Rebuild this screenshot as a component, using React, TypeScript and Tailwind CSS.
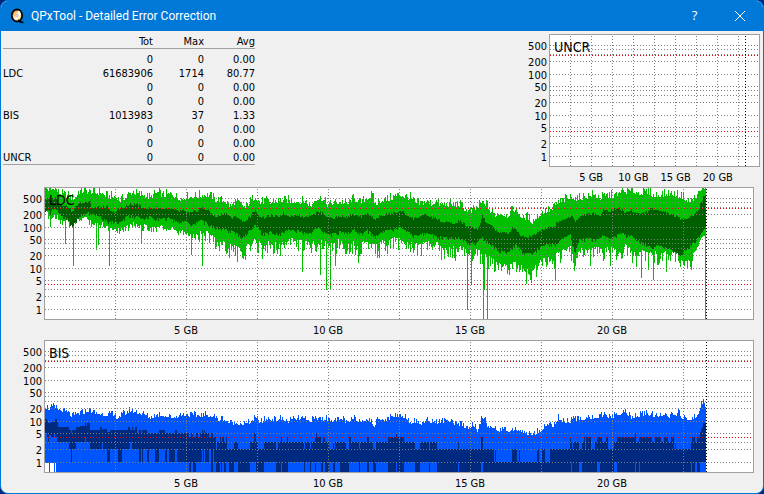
import { ReactNode } from "react";

type Points = number[][];

const PLOT_HEIGHT = 133;

// pixel row of a value on the logarithmic axis, 41px per decade
const rowOf = (value: number) => 122 - Math.ceil(41 * Math.log10(value));

const GRID_VALUES = [500, 400, 300, 200, 100, 50, 40, 30, 20, 10, 5, 3, 2, 1];
const LIMIT_ROWS = [21, 97];

const TICKS = [
  { value: 500, className: "" },
  { value: 200, className: "mt-1" },
  { value: 100, className: "mt-px" },
  { value: 50, className: "" },
  { value: 20, className: "mt-1" },
  { value: 10, className: "mt-px" },
  { value: 5, className: "" },
  { value: 2, className: "mt-1" },
  { value: 1, className: "mt-px" },
];

const ROWS = [
  { name: "", tot: "0", max: "0", avg: "0.00" },
  { name: "LDC", tot: "61683906", max: "1714", avg: "80.77" },
  { name: "", tot: "0", max: "0", avg: "0.00" },
  { name: "", tot: "0", max: "0", avg: "0.00" },
  { name: "BIS", tot: "1013983", max: "37", avg: "1.33" },
  { name: "", tot: "0", max: "0", avg: "0.00" },
  { name: "", tot: "0", max: "0", avg: "0.00" },
  { name: "UNCR", tot: "0", max: "0", avg: "0.00" },
];

// LDC envelopes, [x, y] in plot pixels
const LDC_MAX: Points = [
  [1, 1], [6, 3], [11, 1], [14, 6], [19, 8], [24, 9], [28, 12], [31, 11], [34, 5], [39, 4], [44, 5], [53, 6],
  [56, 5], [61, 9], [66, 10], [71, 10], [76, 13], [81, 11], [84, 8], [89, 5], [94, 8], [99, 8], [106, 11],
  [111, 7], [114, 6], [118, 9], [128, 7], [133, 11], [138, 12], [143, 10], [156, 9], [161, 8], [166, 9],
  [171, 13], [181, 14], [186, 20], [191, 15], [196, 17], [201, 21], [206, 14], [211, 10], [216, 16],
  [221, 14], [226, 16], [231, 14], [246, 14], [256, 15], [261, 14], [266, 20], [271, 12], [278, 12],
  [284, 19], [289, 16], [296, 15], [303, 17], [309, 12], [316, 16], [323, 11], [328, 9], [331, 18],
  [336, 14], [346, 12], [351, 9], [356, 8], [361, 10], [366, 11], [371, 16], [376, 17], [381, 15],
  [388, 17], [391, 14], [396, 18], [409, 18], [416, 18], [421, 23], [427, 25], [433, 21], [437, 16],
  [443, 18], [446, 25], [451, 28], [456, 26], [463, 29], [469, 23], [474, 25], [479, 33], [483, 30],
  [488, 35], [493, 30], [498, 26], [503, 24], [508, 23], [513, 16], [518, 14], [523, 12], [528, 10],
  [533, 13], [538, 11], [549, 8], [556, 11], [563, 9], [571, 9], [574, 9], [576, 4], [581, 5], [587, 4],
  [594, 6], [606, 6], [609, 9], [618, 8], [624, 7], [632, 8], [639, 10], [643, 15], [648, 13], [651, 11],
  [654, 8], [657, 3], [659, 1], [662, 0],
];

const LDC_AVG_TOP: Points = [
  [1, 12], [6, 13], [11, 11], [14, 16], [19, 18], [24, 20], [28, 25], [33, 17], [38, 16], [46, 13], [47, 20],
  [63, 20], [68, 26], [73, 23], [79, 20], [86, 18], [93, 17], [96, 20], [103, 21], [123, 21], [133, 24],
  [139, 24], [146, 26], [153, 24], [156, 20], [161, 22], [166, 25], [171, 30], [176, 28], [181, 26],
  [188, 31], [193, 30], [199, 35], [206, 30], [211, 22], [214, 28], [219, 31], [226, 29], [233, 30],
  [239, 27], [246, 29], [253, 28], [258, 30], [263, 29], [273, 25], [278, 26], [284, 30], [289, 31],
  [296, 29], [303, 30], [309, 28], [316, 30], [323, 27], [331, 32], [336, 29], [343, 27], [349, 26],
  [356, 24], [363, 28], [369, 32], [376, 29], [383, 28], [388, 31], [391, 30], [396, 35], [403, 35],
  [409, 37], [416, 34], [423, 40], [429, 41], [434, 42], [438, 28], [441, 36], [448, 38], [451, 43],
  [456, 46], [464, 46], [470, 40], [476, 48], [484, 50], [489, 48], [496, 43], [503, 41], [509, 40],
  [514, 35], [523, 31], [528, 28], [531, 35], [536, 29], [543, 27], [549, 27], [556, 28], [559, 22],
  [564, 24], [569, 23], [574, 20], [579, 25], [586, 24], [593, 26], [598, 26], [603, 25], [606, 22],
  [613, 23], [619, 24], [624, 26], [629, 28], [636, 32], [643, 31], [649, 28], [654, 23], [657, 16],
  [659, 11], [662, 7],
];

const LDC_AVG_BOTTOM: Points = [
  [1, 23], [6, 25], [11, 21], [16, 29], [23, 31], [28, 40], [34, 30], [44, 26], [48, 28], [56, 30], [64, 35],
  [71, 35], [76, 36], [83, 29], [89, 29], [98, 32], [106, 30], [114, 32], [123, 31], [133, 35], [139, 34],
  [148, 38], [156, 33], [163, 36], [171, 41], [176, 41], [183, 43], [189, 45], [199, 50], [206, 43],
  [211, 38], [218, 47], [226, 45], [236, 47], [243, 43], [251, 44], [256, 43], [264, 48], [273, 40],
  [279, 45], [286, 48], [296, 45], [304, 46], [309, 43], [318, 47], [323, 43], [331, 50], [338, 45],
  [346, 43], [356, 41], [363, 45], [371, 49], [379, 46], [388, 48], [394, 50], [404, 51], [414, 50],
  [423, 56], [431, 56], [438, 51], [444, 56], [451, 61], [459, 65], [464, 66], [471, 58], [481, 67],
  [489, 66], [496, 61], [503, 58], [511, 58], [519, 51], [526, 48], [529, 60], [531, 66], [534, 54],
  [543, 51], [549, 53], [559, 48], [566, 53], [572, 48], [576, 47], [585, 48], [591, 52], [597, 55],
  [606, 61], [614, 58], [622, 61], [629, 65], [635, 68], [643, 61], [649, 56], [654, 51], [658, 45],
  [662, 38],
];

const LDC_MIN: Points = [
  [1, 24], [7, 32], [11, 28], [16, 33], [23, 35], [28, 40], [34, 32], [41, 31], [46, 35], [53, 38], [59, 36],
  [64, 41], [71, 41], [76, 43], [83, 40], [88, 36], [94, 40], [103, 39], [111, 42], [118, 40], [123, 43],
  [128, 42], [133, 47], [138, 45], [143, 48], [148, 49], [153, 48], [156, 43], [163, 45], [169, 50],
  [174, 56], [181, 55], [189, 60], [199, 64], [206, 56], [213, 53], [218, 60], [226, 55], [234, 57],
  [243, 53], [251, 53], [259, 55], [266, 58], [271, 53], [279, 54], [286, 57], [296, 53], [303, 57],
  [309, 56], [314, 62], [319, 54], [326, 57], [331, 60], [338, 55], [344, 56], [351, 51], [356, 53],
  [366, 54], [373, 59], [383, 56], [393, 57], [399, 63], [409, 61], [418, 61], [423, 65], [433, 64],
  [439, 67], [446, 72], [453, 77], [463, 80], [471, 76], [481, 82], [488, 83], [494, 77], [503, 69],
  [508, 73], [513, 67], [519, 64], [526, 61], [530, 76], [536, 63], [543, 61], [559, 63], [566, 61],
  [574, 64], [578, 68], [582, 56], [589, 66], [596, 63], [604, 67], [611, 65], [618, 68], [625, 63],
  [632, 66], [639, 72], [645, 76], [649, 68], [653, 60], [657, 53], [660, 48], [662, 44],
];

const LDC_DROPS: Points = [
  [6, 40], [21, 57], [29, 79], [52, 63], [54, 58], [65, 79], [97, 56], [147, 68], [158, 79], [185, 71],
  [193, 75], [236, 69], [258, 85], [276, 88], [282, 103], [286, 103], [291, 79], [314, 76], [335, 71],
  [397, 73], [411, 74], [423, 123], [427, 98], [439, 132], [440, 103], [443, 132], [482, 97], [487, 96],
  [511, 93], [531, 79], [546, 79], [566, 79], [592, 80], [597, 91], [604, 83], [609, 93], [622, 85],
  [647, 83], [661, 132],
];

const BIS_MAX: Points = [
  [1, 67], [4, 69], [9, 68], [14, 70], [23, 73], [28, 77], [33, 75], [39, 73], [44, 71], [49, 73], [56, 75],
  [66, 75], [73, 78], [79, 75], [86, 71], [93, 73], [99, 75], [106, 78], [116, 75], [123, 77], [129, 78],
  [139, 75], [146, 76], [156, 76], [163, 76], [170, 77], [174, 81], [178, 79], [183, 82], [189, 84],
  [204, 84], [211, 79], [216, 83], [223, 79], [231, 81], [236, 79], [243, 82], [249, 80], [258, 79],
  [264, 82], [271, 79], [286, 80], [293, 82], [299, 79], [303, 86], [308, 79], [316, 82], [323, 79],
  [330, 86], [334, 79], [343, 80], [351, 76], [361, 77], [366, 83], [371, 82], [376, 84], [383, 82],
  [396, 83], [403, 80], [409, 85], [416, 85], [423, 88], [429, 86], [434, 92], [437, 79], [441, 79],
  [443, 87], [451, 88], [456, 92], [463, 92], [469, 90], [476, 91], [482, 94], [489, 95], [496, 91],
  [503, 85], [509, 86], [514, 79], [519, 82], [526, 82], [529, 80], [538, 80], [544, 77], [549, 79],
  [556, 77], [572, 77], [577, 73], [582, 73], [587, 78], [592, 77], [599, 75], [606, 75], [612, 78],
  [619, 74], [625, 77], [634, 74], [639, 79], [645, 80], [650, 78], [654, 74], [656, 68], [657, 61],
  [658, 64], [659, 59], [660, 63], [661, 67], [662, 73],
];

// BIS average band as blocks, [x, width, top, bottom]
const BIS_BLOCKS: Points = [
  [1, 2, 79, 93], [3, 1, 81, 97], [4, 1, 83, 102], [5, 2, 83, 95], [7, 3, 82, 97], [10, 1, 81, 93],
  [11, 2, 79, 97], [13, 1, 82, 102], [14, 11, 87, 102], [25, 2, 90, 109], [27, 1, 93, 122], [28, 4, 90, 109],
  [32, 4, 87, 102], [36, 5, 86, 102], [41, 1, 83, 97], [42, 1, 86, 102], [43, 3, 83, 102], [46, 10, 90, 109],
  [56, 2, 87, 109], [58, 1, 90, 102], [59, 4, 89, 109], [63, 3, 92, 122], [66, 8, 90, 109], [74, 4, 90, 122],
  [78, 6, 90, 109], [84, 2, 87, 109], [86, 2, 90, 102], [88, 1, 87, 109], [89, 2, 90, 109], [91, 2, 87, 109],
  [93, 2, 93, 109], [95, 2, 90, 122], [97, 1, 93, 109], [98, 1, 90, 122], [99, 4, 90, 109], [103, 2, 93, 122],
  [105, 6, 93, 109], [111, 4, 93, 122], [115, 6, 90, 109], [121, 2, 93, 122], [123, 2, 93, 109],
  [125, 6, 93, 122], [131, 2, 90, 109], [133, 12, 93, 122], [145, 2, 97, 132], [147, 2, 93, 122],
  [149, 3, 97, 132], [152, 2, 93, 122], [154, 2, 97, 122], [156, 2, 93, 122], [158, 1, 90, 109],
  [159, 1, 93, 122], [160, 1, 90, 109], [161, 4, 93, 122], [165, 2, 97, 109], [167, 2, 93, 132],
  [169, 1, 97, 109], [170, 2, 97, 122], [172, 1, 109, 132], [173, 3, 102, 132], [176, 1, 97, 122],
  [177, 1, 102, 132], [178, 2, 97, 122], [180, 2, 102, 132], [182, 1, 97, 122], [183, 2, 109, 122],
  [185, 5, 109, 132], [190, 4, 102, 122], [194, 2, 109, 132], [196, 10, 109, 132], [206, 4, 102, 122],
  [210, 2, 93, 122], [212, 2, 102, 132], [214, 2, 109, 132], [216, 4, 109, 132], [220, 12, 102, 122],
  [232, 2, 109, 132], [234, 3, 102, 132], [237, 1, 97, 122], [238, 5, 102, 132], [243, 1, 97, 132],
  [244, 16, 102, 122], [260, 1, 109, 132], [261, 5, 102, 122], [266, 1, 109, 132], [267, 4, 102, 122],
  [271, 1, 97, 132], [272, 1, 93, 122], [273, 4, 97, 122], [277, 2, 102, 132], [279, 2, 97, 122],
  [281, 2, 102, 132], [283, 2, 102, 132], [285, 4, 109, 122], [289, 1, 102, 132], [290, 1, 109, 132],
  [291, 5, 102, 122], [296, 6, 102, 132], [302, 3, 109, 132], [305, 2, 97, 122], [307, 8, 102, 122],
  [315, 1, 109, 132], [316, 7, 102, 122], [323, 2, 97, 132], [325, 4, 102, 122], [329, 3, 109, 132],
  [332, 12, 102, 122], [344, 8, 97, 132], [352, 1, 93, 122], [353, 7, 97, 132], [360, 11, 102, 122],
  [371, 5, 109, 132], [376, 9, 102, 122], [385, 1, 109, 132], [386, 7, 102, 122], [393, 21, 109, 132],
  [414, 1, 102, 122], [415, 22, 109, 132], [437, 2, 97, 122], [439, 11, 109, 132], [450, 1, 122, 132],
  [451, 1, 109, 132], [452, 16, 122, 132], [468, 5, 109, 132], [473, 2, 122, 132], [475, 1, 109, 132],
  [476, 17, 122, 132], [493, 2, 109, 132], [495, 3, 122, 132], [498, 3, 109, 132], [501, 5, 122, 132],
  [506, 20, 109, 132], [526, 1, 97, 132], [527, 1, 102, 122], [528, 1, 109, 132], [529, 6, 102, 132],
  [535, 3, 109, 122], [538, 2, 102, 132], [540, 1, 97, 132], [541, 1, 109, 132], [542, 5, 97, 132],
  [547, 4, 109, 132], [551, 2, 102, 132], [553, 3, 97, 122], [556, 2, 97, 132], [558, 4, 102, 132],
  [562, 2, 97, 132], [564, 6, 109, 132], [570, 3, 102, 122], [573, 18, 97, 132], [591, 1, 93, 122],
  [592, 3, 102, 132], [595, 1, 97, 122], [596, 12, 97, 132], [608, 3, 102, 132], [611, 6, 97, 132],
  [617, 3, 102, 132], [620, 4, 97, 132], [624, 3, 102, 132], [627, 3, 97, 132], [630, 1, 109, 132],
  [631, 1, 102, 132], [632, 15, 109, 132], [647, 1, 102, 122], [648, 3, 97, 132], [651, 2, 102, 122],
  [653, 3, 97, 132], [656, 1, 92, 122], [657, 1, 89, 122], [658, 1, 87, 122], [659, 3, 83, 122],
];

// stable jitter between 0 and 1, skewed to small values
const jitter = (x: number, seed: number) => {
  const s = Math.sin(x * 12.9898 + seed * 78.233) * 43758.5453;
  const f = s - Math.floor(s);
  return f * f;
};

const valueAt = (points: Points, x: number) => {
  for (let i = 1; i < points.length; i++) {
    const [x0, y0] = points[i - 1];
    const [x1, y1] = points[i];
    if (x >= x0 && x <= x1) {
      return y0 + ((y1 - y0) * (x - x0)) / (x1 - x0);
    }
  }
  return points[points.length - 1][1];
};

const columns = Array.from({ length: 661 }, (_, i) => i + 1);

const bar = (x: number, top: number, bottom: number) =>
  `M${x} ${Math.max(1, Math.round(top))}h1V${Math.round(bottom)}h-1z`;

const dropAt = (x: number) => LDC_DROPS.find((drop) => drop[0] === x)?.[1] ?? 0;

const ldcRange = columns
  .map((x) =>
    bar(
      x,
      valueAt(LDC_MAX, x) + 2 - jitter(x, 1) * 8,
      Math.max(
        valueAt(LDC_MIN, x) - 2 + jitter(x, 2) * (x < 150 ? 7 : x > 648 ? 3 : 14),
        dropAt(x)
      )
    )
  )
  .join("");

const ldcAverage = columns
  .map((x) =>
    bar(
      x,
      valueAt(LDC_AVG_TOP, x) + 1 - jitter(x, 3) * 3,
      valueAt(LDC_AVG_BOTTOM, x) - 1 + jitter(x, 4) * 4
    )
  )
  .join("");

const bisRange = columns
  .map((x) => {
    const isGap = (x >= 1 && x <= 4) || (x >= 6 && x <= 9) || x === 11;
    const noise = x > 653 ? 0 : 1 - jitter(x, 5) * 6;
    return bar(x, valueAt(BIS_MAX, x) + noise, isGap ? 123 : 132);
  })
  .join("");

const bisAverage = BIS_BLOCKS.map(
  ([x, width, top, bottom]) => `M${x} ${top}h${width}V${bottom}h-${width}z`
).join("");

interface IChart {
  name: string;
  width: number;
  step: number;
  end: number;
  className: string;
  axisClassName: string;
  children?: ReactNode;
}

const Chart = ({
  name,
  width,
  step,
  end,
  className,
  axisClassName,
  children,
}: IChart) => {
  return (
    <section className={`flex ${className}`} aria-label={name}>
      <ol
        className={`shrink-0 pt-[7px] pr-0.5 text-right leading-[12px] ${axisClassName}`}
      >
        {TICKS.map((tick) => (
          <li key={tick.value} className={tick.className}>
            {tick.value}
          </li>
        ))}
      </ol>
      <div className="relative min-w-0 flex-1">
        <svg
          viewBox={`0 0 ${width} ${PLOT_HEIGHT}`}
          preserveAspectRatio="none"
          shapeRendering="crispEdges"
          className="block h-[133px] w-full bg-white"
          aria-hidden="true"
        >
          {children}
          <g stroke="#808080" strokeDasharray="1 2">
            {GRID_VALUES.map((value) => (
              <line
                key={value}
                x1="1"
                x2={width - 1}
                y1={rowOf(value) + 0.5}
                y2={rowOf(value) + 0.5}
              />
            ))}
            {Array.from({ length: 9 }, (_, i) => (i + 1) * step).map((x) => (
              <line key={x} x1={x + 0.5} x2={x + 0.5} y1="2" y2="132" />
            ))}
          </g>
          <g stroke="#ff0000" strokeDasharray="1 2">
            {LIMIT_ROWS.map((y) => (
              <line key={y} x1="1" x2={width - 1} y1={y + 0.5} y2={y + 0.5} />
            ))}
          </g>
          <line
            x1={end + 0.5}
            x2={end + 0.5}
            y1="2"
            y2="132"
            stroke="#000"
            strokeDasharray="1 2"
          />
          <rect
            x="0.5"
            y="0.5"
            width={width - 1}
            height={PLOT_HEIGHT - 1}
            fill="none"
            stroke="#a0a0a0"
          />
        </svg>
        <h2 className="absolute top-[5px] left-[5px] text-[14px] leading-4">
          {name}
        </h2>
        <ol className="mt-[5px] grid grid-cols-10 text-center leading-[12px] whitespace-nowrap">
          <li className="col-span-2 col-start-2">5 GB</li>
          <li className="col-span-2">10 GB</li>
          <li className="col-span-2">15 GB</li>
          <li className="col-span-2">20 GB</li>
        </ol>
      </div>
    </section>
  );
};

const TitleBar = () => {
  return (
    <header className="flex h-[30px] items-center bg-[#0078d7] pl-[9px] text-white">
      <svg width="15" height="16" viewBox="0 0 15 16" aria-hidden="true">
        <defs>
          <linearGradient id="disc" x1="0" y1="0" x2="1" y2="1">
            <stop offset="0" stopColor="#e88a20" />
            <stop offset="0.4" stopColor="#ffcf80" />
            <stop offset="0.55" stopColor="#ffffff" />
            <stop offset="0.7" stopColor="#ffe9a0" />
            <stop offset="1" stopColor="#f0a830" />
          </linearGradient>
        </defs>
        <ellipse cx="7" cy="7.5" rx="5.2" ry="6" fill="url(#disc)" stroke="#000" strokeWidth="1.8" />
        <path d="M7 7.5L8.5 2.5L10.5 4z" fill="#fff" />
        <circle cx="7" cy="7.5" r="1.2" fill="#dcdce8" stroke="#b0a8a0" strokeWidth="0.5" />
        <path d="M8 12.5c1.5 0 2 2.3 5.5 1.8" fill="none" stroke="#000" strokeWidth="1.8" />
      </svg>
      <h1 className="ml-1.5 flex-1 font-['Roboto','Noto_Sans',sans-serif] text-[12px] leading-4">
        QPxTool - Detailed Error Correction
      </h1>
      <button
        type="button"
        aria-label="Help"
        className="flex h-full w-[45px] items-center justify-center font-['Open_Sans','Noto_Sans',sans-serif] text-[13px]"
      >
        ?
      </button>
      <button
        type="button"
        aria-label="Close"
        className="flex h-full w-[46px] items-center justify-center"
      >
        <svg width="10" height="10" viewBox="0 0 10 10" aria-hidden="true">
          <path d="M0 0l10 10M10 0l-10 10" stroke="#fff" fill="none" />
        </svg>
      </button>
    </header>
  );
};

const Summary = () => {
  return (
    <table className="w-[252px] table-fixed border-separate border-spacing-0 self-start text-right leading-[12px]">
      <thead>
        <tr>
          <th className="w-[90px] border-b border-[#a0a0a0]" />
          <th className="w-[60px] border-b border-[#a0a0a0] pt-0.5 font-normal">Tot</th>
          <th className="border-b border-[#a0a0a0] pt-0.5 font-normal">Max</th>
          <th className="border-b border-[#a0a0a0] pt-0.5 font-normal">Avg</th>
        </tr>
        <tr aria-hidden="true">
          <td className="h-[3px]" colSpan={4} />
        </tr>
      </thead>
      <tbody>
        {ROWS.map((row, index) => (
          <tr key={index} className="h-[14px]">
            <th className="pt-0.5 text-left font-normal">{row.name}</th>
            <td className="pt-0.5">{row.tot}</td>
            <td className="pt-0.5">{row.max}</td>
            <td className="pt-0.5">{row.avg}</td>
          </tr>
        ))}
      </tbody>
      <tfoot>
        <tr aria-hidden="true">
          <td className="h-px bg-[#a0a0a0]" colSpan={4} />
        </tr>
      </tfoot>
    </table>
  );
};

const App = () => {
  return (
    <div className="min-h-screen bg-[#00287a]">
      <div className="overflow-hidden rounded-lg border border-[#0078d7] bg-[#f0f0f0] font-['DejaVu_Sans_Condensed','DejaVu_Sans',sans-serif] text-[11px] text-black">
        <TitleBar />
        <main className="flex flex-col gap-[3px] pt-[3px] pb-[3px]">
          <div className="flex justify-between pr-[3px] pl-0.5">
            <Summary />
            <Chart
              name="UNCR"
              width={211}
              step={21}
              end={196}
              className="w-[241px]"
              axisClassName="w-[30px]"
            />
          </div>
          <Chart
            name="LDC"
            width={710}
            step={71}
            end={662}
            className="pr-[9px]"
            axisClassName="w-[43px]"
          >
            <path d={ldcRange} fill="#00c000" />
            <path d={ldcAverage} fill="#006000" />
          </Chart>
          <Chart
            name="BIS"
            width={710}
            step={71}
            end={662}
            className="pr-[9px]"
            axisClassName="w-[43px]"
          >
            <path d={bisRange} fill="#0055ff" />
            <path d={bisAverage} fill="#002a7f" />
          </Chart>
        </main>
      </div>
    </div>
  );
};

export default App;
